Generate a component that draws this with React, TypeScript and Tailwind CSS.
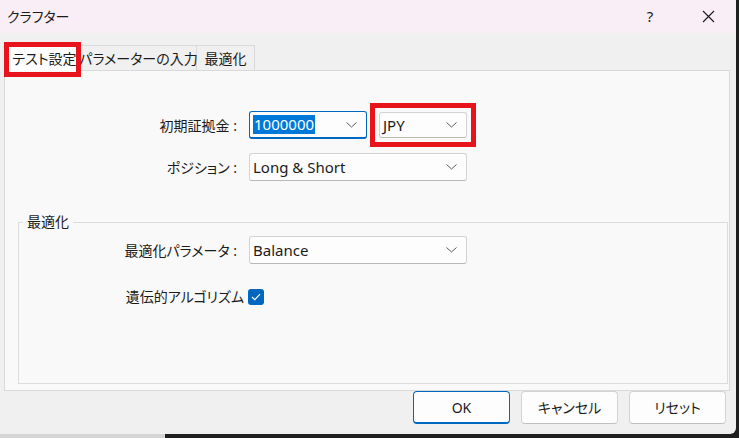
import React from "react";

const font = { fontFamily: '"Noto Sans", "Noto Sans CJK JP", sans-serif' };

function Chevron() {
  return (
    <svg width="11" height="6" viewBox="0 0 11 6" className="shrink-0">
      <path d="M0.5 0.5 L5.5 5 L10.5 0.5" fill="none" stroke="#5c5c5c" strokeWidth="1" />
    </svg>
  );
}

function Combo({ w, h = "h-[28px]", children, focused = false }: { w: string; h?: string; children: React.ReactNode; focused?: boolean }) {
  return (
    <div
      className={`${w} ${h} flex items-center justify-between pl-[3px] pr-[9px] rounded-[3px] bg-[#fdfdfd] border ${
        focused ? "border-[#0067c0] border-b-[2px]" : "border-[#d3d3d3] border-b-[#b9b9b9]"
      }`}
    >
      <div className="flex items-center text-[14px] text-[#1b1b1b] whitespace-nowrap">{children}</div>
      <Chevron />
    </div>
  );
}

export default function App() {
  return (
    <div className="w-[739px] h-[438px] bg-[#1f1f1f] overflow-hidden flex flex-col [font-feature-settings:'palt']" style={font}>
      <div className="flex">
        <div className="w-[736px] h-[434px] bg-[#f0f0f0] flex flex-col rounded-br-[6px]">
          {/* title bar */}
          <div className="h-[33px] bg-[#f9eef5] flex items-center shrink-0">
            <div className="pl-[7px] text-[14px] text-[#1b1b1b] flex-1">クラフター</div>
            <div className="w-[30px] text-center text-[15px] text-[#1b1b1b] mr-[28px]">?</div>
            <div className="w-[30px] flex justify-center mr-[13px]">
              <svg width="13" height="13" viewBox="0 0 13 13">
                <path d="M1 1 L12 12 M12 1 L1 12" stroke="#1b1b1b" strokeWidth="1.1" fill="none" />
              </svg>
            </div>
          </div>
          {/* body */}
          <div className="flex-1 flex flex-col pt-[12px]">
            <div className="relative flex items-end h-[26px] ml-[8px]">
              <div className="w-[73px] h-[26px] bg-[#ffffff] border border-b-0 border-[#d9d9d9] flex items-center justify-center text-[14px] text-[#1b1b1b] whitespace-nowrap">
                テスト設定
              </div>
              <div className="w-[116px] h-[26px] bg-[#f0f0f0] border-t border-r border-[#d9d9d9] border-b flex items-center justify-center text-[14px] text-[#1b1b1b] whitespace-nowrap">
                パラメーターの入力
              </div>
              <div className="w-[58px] h-[26px] bg-[#f0f0f0] border-t border-r border-[#d9d9d9] border-b flex items-center justify-center text-[14px] text-[#1b1b1b] whitespace-nowrap">
                最適化
              </div>
              <div className="absolute left-[-4px] top-[-3px] w-[77px] h-[35px] border-[5px] border-[#e8141c] z-10" />
            </div>
            <div className="ml-[4px] w-[726px] h-[321px] -mt-px bg-[#f9f9f9] border border-[#d9d9d9] flex flex-col">
              {/* row 1 */}
              <div className="flex items-center mt-[40px]">
                <div className="w-[232px] flex justify-end text-[14px] text-[#1b1b1b] whitespace-nowrap">初期証拠金 :</div>
                <div className="ml-[12px]">
                  <Combo w="w-[118px]" focused>
                    <span className="bg-[#0078d7] text-white text-[15px] px-[1px] leading-[19px]">1000000</span>
                  </Combo>
                </div>
                <div className="ml-[12px] relative">
                  <Combo w="w-[88px]" h="h-[26px]">
                    <span className="text-[15px]">JPY</span>
                  </Combo>
                  <div className="absolute left-[-9px] top-[-9px] w-[106px] h-[44px] border-[5px] border-[#e8141c]" />
                </div>
              </div>
              {/* row 2 */}
              <div className="flex items-center mt-[14px]">
                <div className="w-[232px] flex justify-end text-[14px] text-[#1b1b1b] whitespace-nowrap">ポジション :</div>
                <div className="ml-[12px]">
                  <Combo w="w-[218px]">
                    <span className="text-[15px]">Long &amp; Short</span>
                  </Combo>
                </div>
              </div>
              {/* group box */}
              <div className="relative ml-[13px] mt-[41px] w-[710px] h-[162px] border border-[#dcdcdc] flex flex-col">
                <div className="absolute left-[4px] top-[-11px] px-[4px] bg-[#f9f9f9] text-[14px] text-[#1b1b1b] leading-[20px]">
                  最適化
                </div>
                <div className="flex items-center mt-[13px]">
                  <div className="w-[218px] flex justify-end text-[14px] text-[#1b1b1b] whitespace-nowrap">最適化パラメータ :</div>
                  <div className="ml-[12px]">
                    <Combo w="w-[218px]">
                      <span className="text-[15px]">Balance</span>
                    </Combo>
                  </div>
                </div>
                <div className="flex items-center mt-[22px]">
                  <div className="w-[225px] flex justify-end text-[14px] text-[#1b1b1b] whitespace-nowrap">遺伝的アルゴリズム</div>
                  <div className="ml-[4px] w-[16px] h-[16px] rounded-[3px] bg-[#0067c0] flex items-center justify-center">
                    <svg width="10" height="8" viewBox="0 0 10 8">
                      <path d="M1 4 L3.8 6.6 L9 1.2" fill="none" stroke="#ffffff" strokeWidth="1.2" />
                    </svg>
                  </div>
                </div>
              </div>
            </div>
            {/* buttons */}
            <div className="flex justify-end gap-[11px] mr-[10px] mt-[0px]">
              <div className="w-[97px] h-[33px] rounded-[4px] bg-[#fdfdfd] border border-[#0067c0] border-b-[2px] flex items-center justify-center text-[14px] text-[#1b1b1b]">
                OK
              </div>
              <div className="w-[97px] h-[33px] rounded-[4px] bg-[#fdfdfd] border border-[#d3d3d3] border-b-[#c0c0c0] flex items-center justify-center text-[14px] text-[#1b1b1b]">
                キャンセル
              </div>
              <div className="w-[97px] h-[33px] rounded-[4px] bg-[#fdfdfd] border border-[#d3d3d3] border-b-[#c0c0c0] flex items-center justify-center text-[14px] text-[#1b1b1b]">
                リセット
              </div>
            </div>
          </div>
        </div>
        <div className="flex-1 bg-[#1f1f1f]" />
      </div>
      <div className="flex flex-1">
        <div className="w-[165px] bg-[#d6d6d6]" />
        <div className="flex-1 bg-[#1f1f1f]" />
      </div>
    </div>
  );
}
